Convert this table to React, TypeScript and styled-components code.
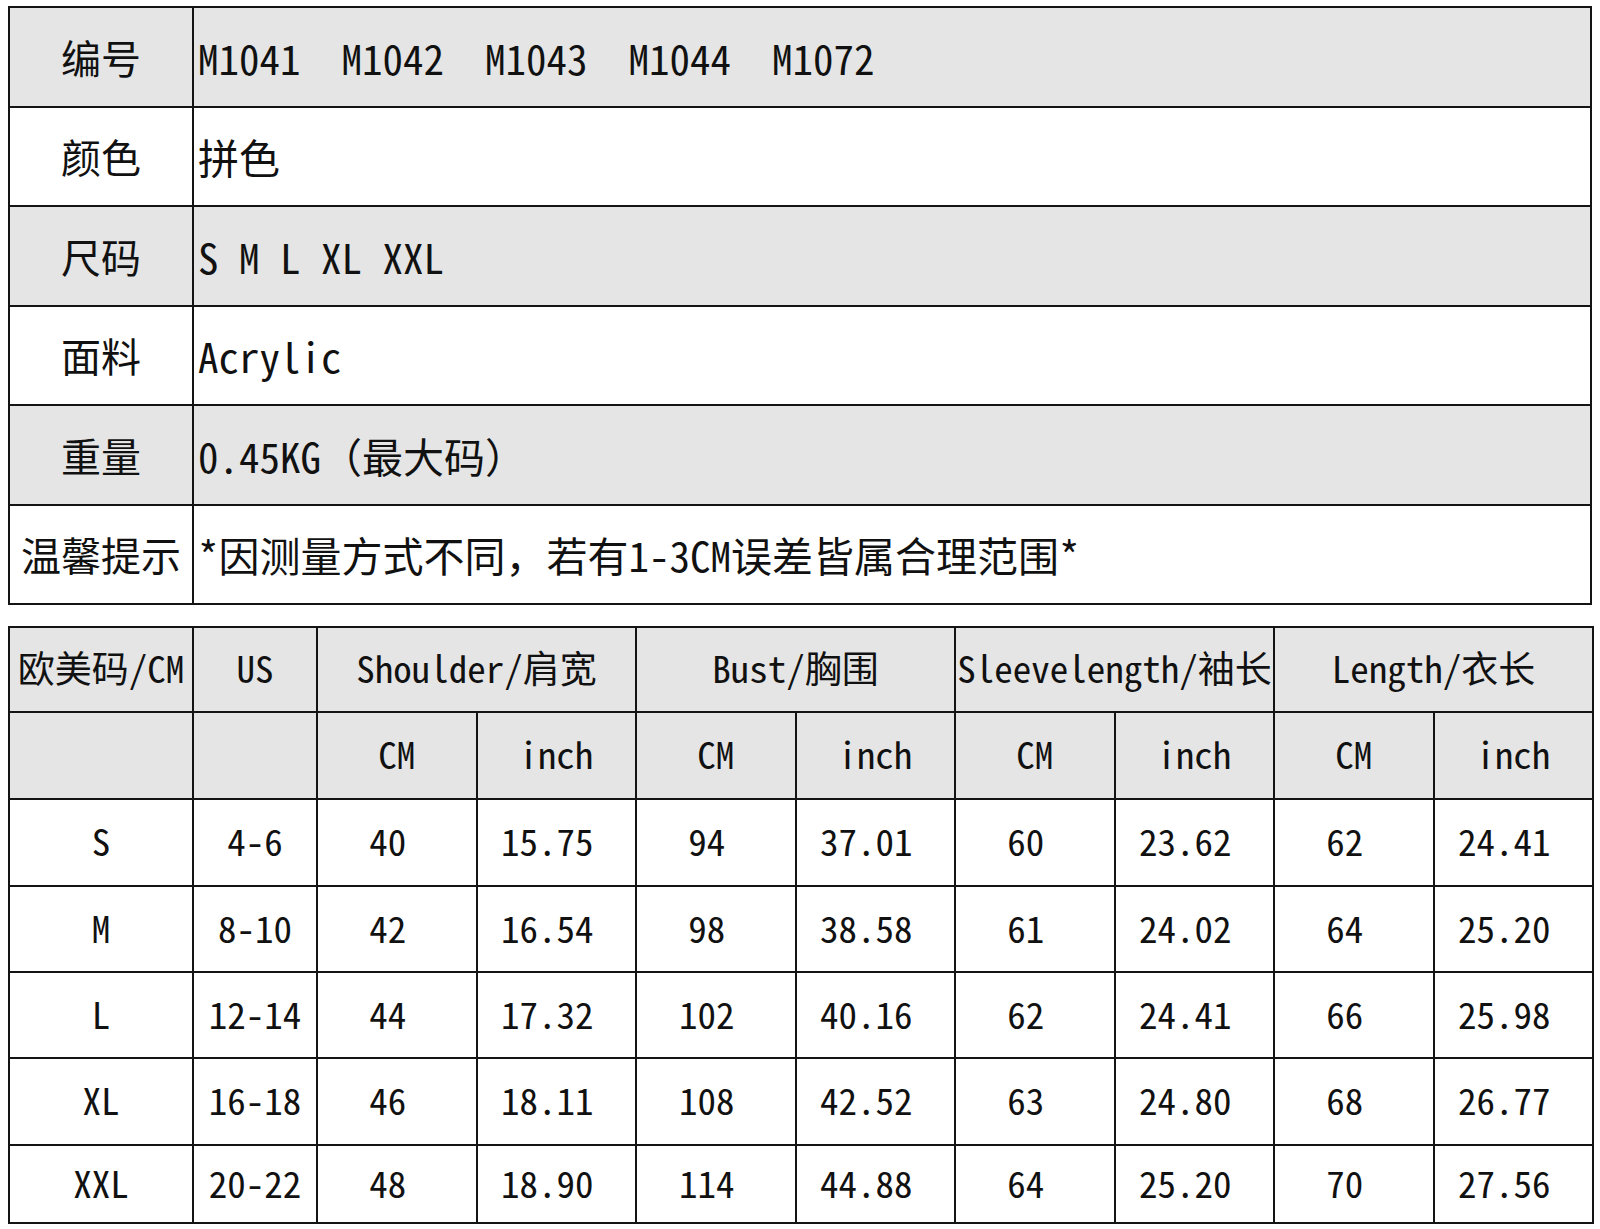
import React from "react";
import styled, { createGlobalStyle } from "styled-components";

const GlobalStyle = createGlobalStyle`
  body {
    margin: 0;
    background: #ffffff;
  }
`;

const FONT = `"Noto Sans Mono CJK SC", "Noto Sans CJK SC", "DejaVu Sans Mono", monospace`;
const LINE = "2px solid #141414";
const SHADE = "#e5e5e5";

const Page = styled.div`
  display: flex;
  flex-direction: column;
  gap: 21px;
  padding: 6px 8px 0 8px;
  width: 1584px;
`;

const InfoTable = styled.table`
  width: 1584px;
  border-collapse: collapse;
  table-layout: fixed;
  font-family: ${FONT};
  font-size: 41px;
  color: #111;
`;

const InfoRow = styled.tr<{ $shade?: boolean }>`
  height: 99.5px;
  background: ${(p) => (p.$shade ? SHADE : "#ffffff")};
`;

const LabelCell = styled.td`
  width: 184px;
  border: ${LINE};
  padding: 0;
  text-align: center;
  white-space: nowrap;
  font-size: 40px;
`;

const ValueCell = styled.td`
  border: ${LINE};
  padding: 0 0 0 4px;
  text-align: left;
  white-space: pre;
`;

const SizeTable = styled.table`
  width: 1584px;
  border-collapse: collapse;
  table-layout: fixed;
  font-family: ${FONT};
  font-size: 37px;
  color: #111;
`;

const SizeRow = styled.tr<{ $shade?: boolean; $h: number }>`
  height: ${(p) => p.$h}px;
  background: ${(p) => (p.$shade ? SHADE : "#ffffff")};
`;

const SizeCell = styled.td<{ $trail?: boolean }>`
  border: ${LINE};
  padding: 0 ${(p) => (p.$trail ? "18px" : "0")} 5px 0;
  text-align: center;
  white-space: nowrap;
  overflow: visible;
`;

const info: { label: string; value: string }[] = [
  { label: "编号", value: "M1041  M1042  M1043  M1044  M1072" },
  { label: "颜色", value: "拼色" },
  { label: "尺码", value: "S M L XL XXL" },
  { label: "面料", value: "Acrylic" },
  { label: "重量", value: "0.45KG（最大码）" },
  { label: "温馨提示", value: "*因测量方式不同，若有1-3CM误差皆属合理范围*" },
];

const groups = ["Shoulder/肩宽", "Bust/胸围", "Sleevelength/袖长", "Length/衣长"];

const sizes: { size: string; us: string; values: string[]; h: number }[] = [
  { size: "S", us: "4-6", values: ["40", "15.75", "94", "37.01", "60", "23.62", "62", "24.41"], h: 87 },
  { size: "M", us: "8-10", values: ["42", "16.54", "98", "38.58", "61", "24.02", "64", "25.20"], h: 86 },
  { size: "L", us: "12-14", values: ["44", "17.32", "102", "40.16", "62", "24.41", "66", "25.98"], h: 86 },
  { size: "XL", us: "16-18", values: ["46", "18.11", "108", "42.52", "63", "24.80", "68", "26.77"], h: 87 },
  { size: "XXL", us: "20-22", values: ["48", "18.90", "114", "44.88", "64", "25.20", "70", "27.56"], h: 78 },
];

function App() {
  return (
    <>
      <GlobalStyle />
      <Page>
        <InfoTable>
          <colgroup>
            <col style={{ width: 184 }} />
            <col />
          </colgroup>
          <tbody>
            {info.map((row, i) => (
              <InfoRow key={row.label} $shade={i % 2 === 0}>
                <LabelCell>{row.label}</LabelCell>
                <ValueCell>{row.value}</ValueCell>
              </InfoRow>
            ))}
          </tbody>
        </InfoTable>

        <SizeTable>
          <colgroup>
            <col style={{ width: 184 }} />
            <col style={{ width: 124 }} />
            {Array.from({ length: 8 }).map((_, i) => (
              <col key={i} style={{ width: 159.5 }} />
            ))}
          </colgroup>
          <tbody>
            <SizeRow $shade $h={85}>
              <SizeCell>欧美码/CM</SizeCell>
              <SizeCell>US</SizeCell>
              {groups.map((g) => (
                <SizeCell key={g} colSpan={2}>
                  {g}
                </SizeCell>
              ))}
            </SizeRow>
            <SizeRow $shade $h={87}>
              <SizeCell />
              <SizeCell />
              {groups.map((g) => (
                <React.Fragment key={g}>
                  <SizeCell>CM</SizeCell>
                  <SizeCell>inch</SizeCell>
                </React.Fragment>
              ))}
            </SizeRow>
            {sizes.map((row) => (
              <SizeRow key={row.size} $h={row.h}>
                <SizeCell>{row.size}</SizeCell>
                <SizeCell>{row.us}</SizeCell>
                {row.values.map((v, i) => (
                  <SizeCell key={i} $trail>
                    {v}
                  </SizeCell>
                ))}
              </SizeRow>
            ))}
          </tbody>
        </SizeTable>
      </Page>
    </>
  );
}

export default App;
